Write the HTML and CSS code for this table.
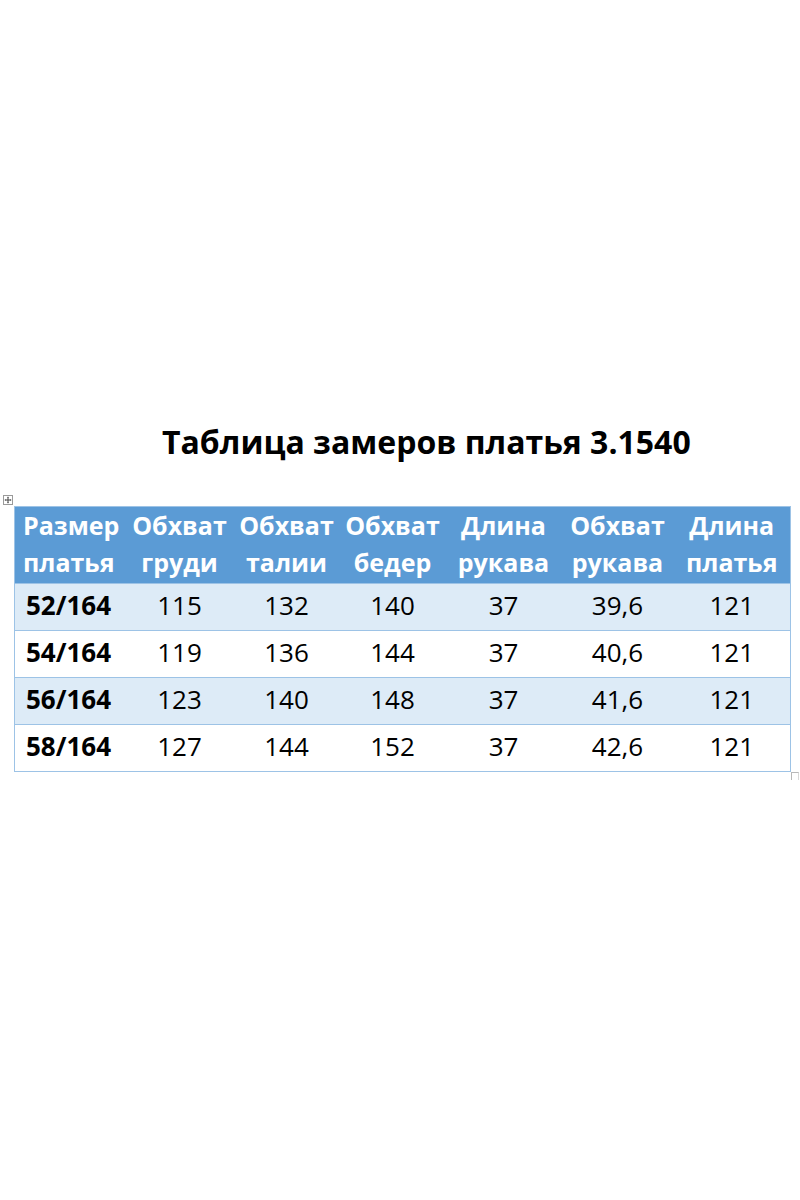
FILE: index.html
```html
<!DOCTYPE html>
<html lang="ru">
<head>
<meta charset="utf-8">
<link rel="stylesheet" href="styles.css">
</head>
<body>
<div class="page">
  <h1 class="title">Таблица замеров платья 3.1540</h1>
  <div class="table-wrap">
    <span class="move-handle">
      <svg width="10" height="10" viewBox="0 0 10 10"><rect x="0.5" y="0.5" width="9" height="9" fill="#fff" stroke="#9a9a9a"/><path d="M5 2v6M2 5h6" stroke="#444" stroke-width="1"/><path d="M5 1.5l-1 1h2zM5 8.5l-1-1h2zM1.5 5l1-1v2zM8.5 5l-1-1v2z" fill="#444"/></svg>
    </span>
    <table class="sizes">
      <colgroup>
        <col class="c1"><col class="c2"><col class="c3"><col class="c4"><col class="c5"><col class="c6"><col class="c7">
      </colgroup>
      <thead>
        <tr>
          <th class="first">Размер<br>платья</th>
          <th>Обхват<br>груди</th>
          <th>Обхват<br>талии</th>
          <th>Обхват<br>бедер</th>
          <th>Длина<br>рукава</th>
          <th>Обхват<br>рукава</th>
          <th>Длина<br>платья</th>
        </tr>
      </thead>
      <tbody>
        <tr class="shade"><td class="first">52/164</td><td>115</td><td>132</td><td>140</td><td>37</td><td>39,6</td><td>121</td></tr>
        <tr><td class="first">54/164</td><td>119</td><td>136</td><td>144</td><td>37</td><td>40,6</td><td>121</td></tr>
        <tr class="shade"><td class="first">56/164</td><td>123</td><td>140</td><td>148</td><td>37</td><td>41,6</td><td>121</td></tr>
        <tr><td class="first">58/164</td><td>127</td><td>144</td><td>152</td><td>37</td><td>42,6</td><td>121</td></tr>
      </tbody>
    </table>
    <span class="resize-handle"></span>
  </div>
</div>
</body>
</html>
```
FILE: styles.css
```css
html, body {
  margin: 0;
  padding: 0;
  background: #ffffff;
}
.page {
  width: 800px;
  height: 1200px;
  padding-top: 420px;
  box-sizing: border-box;
  font-family: "Open Sans", Lato, sans-serif;
  color: #000;
}
.title {
  margin: 0 0 0 162px;
  font-size: 32px;
  font-weight: 700;
  line-height: 44px;
}
.table-wrap {
  position: relative;
  margin-top: 42px;
  margin-left: 14px;
  width: 776px;
}
.move-handle {
  position: absolute;
  left: -11px;
  top: -11px;
  width: 10px;
  height: 10px;
  line-height: 0;
}
.resize-handle {
  position: absolute;
  right: -9px;
  bottom: -8px;
  width: 8px;
  height: 8px;
  border-left: 1px solid #b8b8b8;
  border-top: 1px solid #b8b8b8;
  border-right: 1px solid #d8d8d8;
  box-sizing: border-box;
}
.sizes {
  border-collapse: collapse;
  width: 776px;
  table-layout: fixed;
  border: 1px solid #9dc3e6;
}
.c1 { width: 111px; }
.c2 { width: 108px; }
.c3 { width: 106px; }
.c4 { width: 106px; }
.c5 { width: 116px; }
.c6 { width: 112px; }
.c7 { width: 117px; }
.sizes th {
  background: #5b9bd5;
  color: #ffffff;
  font-size: 25px;
  font-weight: 700;
  line-height: 37px;
  padding: 0 0 2px;
  text-align: center;
  height: 77px;
  box-sizing: border-box;
  white-space: nowrap;
}
.sizes td {
  font-size: 26px;
  line-height: 40px;
  height: 47px;
  padding: 0 0 5px;
  text-align: center;
  border-top: 1px solid #9dc3e6;
  box-sizing: border-box;
}
.sizes .first {
  text-align: left;
  padding-left: 8px;
}
.sizes td.first {
  font-weight: 700;
  padding-left: 11px;
}
.sizes tr.shade td {
  background: #ddebf7;
}
```
